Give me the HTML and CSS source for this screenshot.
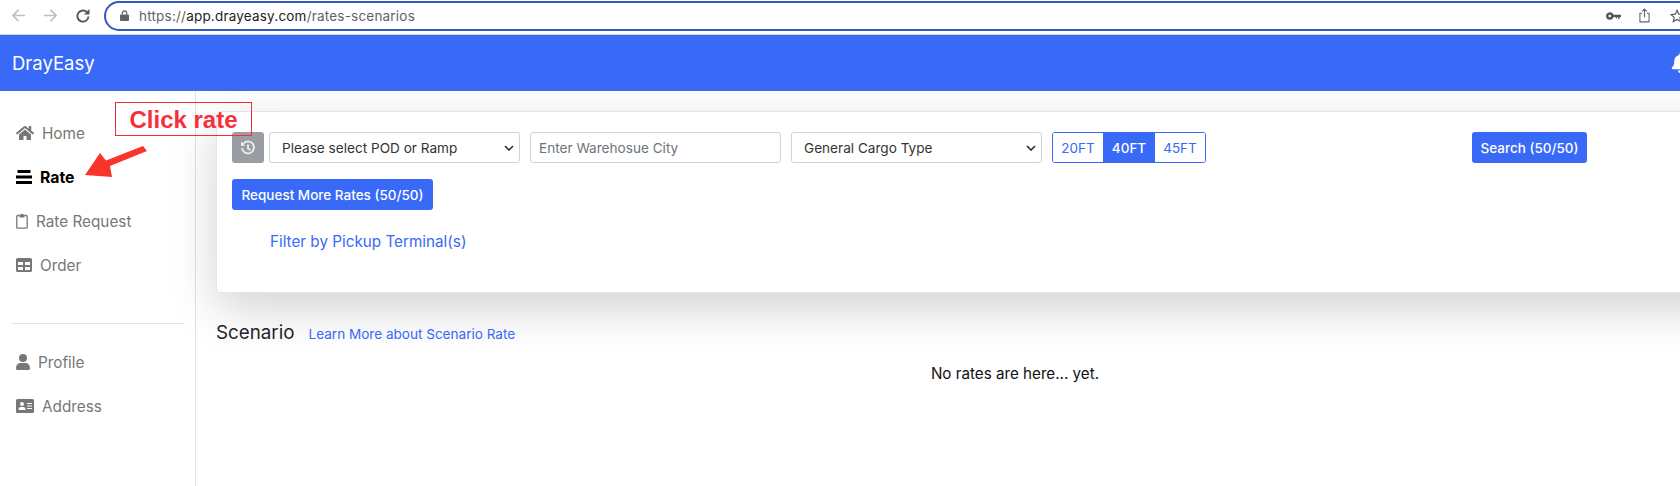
FILE: index.html
```html
<!DOCTYPE html>
<html lang="en">
<head>
<meta charset="utf-8">
<title>DrayEasy - Rates</title>
<link rel="stylesheet" href="styles.css">
</head>
<body>
<div class="chrome">
  <svg class="tb-icon" viewBox="0 0 16 16"><path class="stroke-light" d="M15 8H2M8 2L2 8l6 6"/></svg>
  <svg class="tb-icon" viewBox="0 0 16 16"><path class="stroke-light" d="M1 8h13M8 2l6 6-6 6"/></svg>
  <svg class="tb-icon reload" viewBox="0 0 16 16"><path class="stroke-dark" d="M13.5 8.500A5.600 5.600 0 1 1 12 4.200"/><path class="fill-dark" d="M14.500 1v5.500H9z"/></svg>
  <div class="omnibox">
    <svg class="lock" viewBox="0 0 10 12"><path d="M1 5h8a1 1 0 0 1 1 1v5a1 1 0 0 1-1 1H1a1 1 0 0 1-1-1V6a1 1 0 0 1 1-1z"/><path class="shackle" d="M2.600 5V3.200a2.400 2.400 0 0 1 4.800 0V5"/></svg>
    <span class="url"><span class="url-dim">https://</span>app.drayeasy.com<span class="url-dim">/rates-scenarios</span></span>
    <svg class="key" viewBox="0 0 16 8"><path d="M4 0a4 4 0 1 1-3.800 5.200A4 4 0 0 1 4 0zm0 2.600a1.400 1.400 0 1 0 0 2.800 1.400 1.400 0 0 0 0-2.800zM7.500 2.600H16v2.400h-1.500v2h-1.600V5h-1v1.500h-1.600V5H7.500z"/></svg>
    <svg class="share" viewBox="0 0 12 16"><path d="M3.500 5.500H1v9.500h10V5.500H8.500M6 10V1M3.500 3.500L6 1l2.500 2.500"/></svg>
    <svg class="star" viewBox="0 0 16 16"><path d="M8 1.500l2 4.400 4.800.5-3.600 3.200 1 4.700L8 11.900l-4.200 2.400 1-4.700L1.200 6.400 6 5.900z"/></svg>
  </div>
</div>

<div class="page">
  <header class="navbar">
    <span class="brand">DrayEasy</span>
    <svg class="bell" viewBox="0 0 448 512"><path d="M224 512c35 0 64-29 64-64H160c0 35 29 64 64 64zm215-150c-19-21-55-52-55-154 0-78-54-140-128-155V32a32 32 0 0 0-64 0v21C118 68 64 130 64 208c0 102-36 133-55 154-6 6-9 14-9 22 0 16 13 32 32 32h384c19 0 32-16 32-32 0-8-3-16-9-22z"/></svg>
  </header>

  <div class="layout">
    <nav class="sidebar">
      <a class="nav-item">
        <svg class="ico ico-home" viewBox="0 0 576 512"><path d="M280.37 148.26L96 300.11V464a16 16 0 0 0 16 16l112.06-.29a16 16 0 0 0 15.92-16V368a16 16 0 0 1 16-16h64a16 16 0 0 1 16 16v95.64a16 16 0 0 0 16 16.05L464 480a16 16 0 0 0 16-16V300L295.67 148.26a12.19 12.19 0 0 0-15.3 0zM571.6 251.47L488 182.56V44.05a12 12 0 0 0-12-12h-56a12 12 0 0 0-12 12v72.61L318.47 43a48 48 0 0 0-61 0L4.34 251.47a12 12 0 0 0-1.6 16.9l25.5 31A12 12 0 0 0 45.15 301l235.22-193.74a12.19 12.19 0 0 1 15.3 0L530.9 301a12 12 0 0 0 16.9-1.6l25.5-31a12 12 0 0 0-1.7-16.93z"/></svg>
        <span>Home</span>
      </a>
      <a class="nav-item active">
        <svg class="ico ico-bars" viewBox="0 0 16 14"><path d="M1.500 0h13v3h-13zM0 5.500h16v3H0zM0 11h16v3H0z"/></svg>
        <span>Rate</span>
      </a>
      <a class="nav-item">
        <svg class="ico ico-clip" viewBox="0 0 12 16"><path class="clip-body" d="M3.500 2.500H1.800a1 1 0 0 0-1 1v10.700a1 1 0 0 0 1 1h8.400a1 1 0 0 0 1-1V3.500a1 1 0 0 0-1-1H8.500"/><path d="M3.500 1.500h1.300a1.300 1.300 0 0 1 2.400 0h1.300v3h-5z"/></svg>
        <span>Rate Request</span>
      </a>
      <a class="nav-item">
        <svg class="ico ico-table" viewBox="0 0 16 14"><path d="M1.500 0h13A1.500 1.500 0 0 1 16 1.500v11a1.500 1.500 0 0 1-1.500 1.500h-13A1.500 1.500 0 0 1 0 12.500v-11A1.500 1.500 0 0 1 1.500 0zM2 4v3h5V4zm7 0v3h5V4zM2 9v3h5V9zm7 0v3h5V9z" fill-rule="evenodd"/></svg>
        <span>Order</span>
      </a>
      <hr class="nav-rule">
      <a class="nav-item">
        <svg class="ico ico-user" viewBox="0 0 14 16"><circle cx="7" cy="4" r="4"/><path d="M0 14c0-3 2-5 4.500-5h5c2.500 0 4.500 2 4.500 5v.5a1.500 1.500 0 0 1-1.500 1.500h-11A1.500 1.500 0 0 1 0 14.500z"/></svg>
        <span>Profile</span>
      </a>
      <a class="nav-item">
        <svg class="ico ico-card" viewBox="0 0 18 14"><path fill-rule="evenodd" d="M1.500 0h15A1.500 1.500 0 0 1 18 1.500v11a1.500 1.500 0 0 1-1.500 1.500h-15A1.500 1.500 0 0 1 0 12.500v-11A1.500 1.500 0 0 1 1.500 0zM6 3a2 2 0 1 0 0 4 2 2 0 0 0 0-4zM2.500 11h7c0-2-1-3-2-3h-3c-1 0-2 1-2 3zM11 4v1h5V4zm0 2.500v1h5v-1zM11 9v1h5V9z"/></svg>
        <span>Address</span>
      </a>
    </nav>

    <main class="content">
      <section class="card">
        <div class="search-row">
          <button class="btn btn-history" type="button" aria-label="History">
            <svg viewBox="0 0 16 16" class="history"><path class="hist-stroke" d="M3.200 3.800A6 6 0 1 1 2 8M8 4.500V8.500l2.500 1.500"/><path d="M1 1.500L5.200 5.600 1 6z"/></svg>
          </button>
          <select class="field select-wide">
            <option>Please select POD or Ramp</option>
          </select>
          <input class="field input" type="text" placeholder="Enter Warehosue City">
          <select class="field select-wide">
            <option>General Cargo Type</option>
          </select>
          <div class="btn-group">
            <button class="seg" type="button">20FT</button>
            <button class="seg seg-on" type="button">40FT</button>
            <button class="seg" type="button">45FT</button>
          </div>
          <button class="btn btn-primary btn-search" type="button">Search (50/50)</button>
        </div>
        <div class="request-row">
          <button class="btn btn-primary btn-request" type="button">Request More Rates (50/50)</button>
        </div>
        <a class="filter-link">Filter by Pickup Terminal(s)</a>
      </section>

      <div class="scenario-head">
        <h2 class="scenario-title">Scenario</h2>
        <a class="learn-link">Learn More about Scenario Rate</a>
      </div>
      <p class="empty">No rates are here... yet.</p>
    </main>
  </div>

  <div class="callout">Click rate</div>
  <svg class="callout-arrow" viewBox="0 0 64 33"><path d="M1 30L16 8 22 15.500 59 1 63 6 26 21 28 32z"/></svg>
</div>
</body>
</html>
```
FILE: styles.css
```css
* { box-sizing: border-box; }

html, body {
  margin: 0;
  padding: 0;
  width: 1680px;
  height: 486px;
  overflow: hidden;
  background: #fff;
  font-family: Inter, "Liberation Sans", sans-serif;
  color: #212529;
}

/* Browser toolbar */
.chrome {
  display: flex;
  align-items: center;
  height: 35px;
  width: 1680px;
  padding: 0 0 3px 11px;
  border-bottom: 1px solid #d4d4d4;
  background: #fff;
  overflow: hidden;
}
.tb-icon { width: 15px; height: 15px; margin-right: 17px; flex: none; }
.tb-icon.reload { width: 16px; height: 16px; margin-right: 13px; }
.stroke-light { fill: none; stroke: #c0c0c0; stroke-width: 1.8; }
.stroke-dark { fill: none; stroke: #555; stroke-width: 1.9; }
.fill-dark { fill: #555; }

.omnibox {
  flex: none;
  display: flex;
  align-items: center;
  width: 1640px;
  height: 30px;
  padding-left: 14px;
  border: 2px solid #3557bf;
  border-radius: 15px;
}
.lock { width: 9px; height: 11px; fill: #5f6368; flex: none; }
.shackle { fill: none; stroke: #5f6368; stroke-width: 1.4; }
.url { margin-left: 10px; font-size: 13.5px; color: #222; letter-spacing: .015em; }
.url-dim { color: #5f6368; }
.key { width: 15px; height: 8px; fill: #555; margin-left: 1191px; flex: none; }
.share { width: 11px; height: 15px; fill: none; stroke: #666; stroke-width: 1.2; margin-left: 18px; flex: none; }
.star { width: 14px; height: 14px; fill: none; stroke: #555; stroke-width: 1.3; margin-left: 20px; flex: none; }

/* Page */
.page { position: relative; width: 1814px; }

.navbar {
  position: relative;
  z-index: 2;
  display: flex;
  align-items: center;
  justify-content: space-between;
  height: 56px;
  padding: 0 124px 0 12px;
  background: #3869f7;
}
.brand { color: #fff; font-size: 18.5px; }
.bell { width: 19px; height: 20px; fill: #fff; }

.layout { display: flex; height: 395px; }

.sidebar {
  flex: none;
  width: 196px;
  padding: 20px 0 0;
  border-right: 1px solid #e3e3e3;
}
.nav-item {
  display: flex;
  align-items: center;
  gap: 8px;
  height: 44px;
  padding-left: 16px;
  color: #777;
  font-size: 15.3px;
}
.nav-item.active { color: #000; font-weight: 700; font-size: 15.8px; }
.ico { fill: #777; flex: none; }
.active .ico { fill: #000; }
.ico-home { width: 18px; height: 16px; }
.ico-bars { width: 16px; height: 14px; }
.ico-clip { width: 12px; height: 16px; }
.clip-body { fill: none; stroke: #777; stroke-width: 1.3; }
.ico-table { width: 16px; height: 14px; }
.ico-user { width: 14px; height: 16px; }
.ico-card { width: 18px; height: 14px; }
.nav-rule {
  height: 1px;
  margin: 36px 11px 16px;
  border: 0;
  background: #e3e3e3;
}

.content { flex: 1; min-width: 0; padding: 20px 0 0 20px; }

.card {
  height: 182px;
  padding: 20px 15px 0;
  background: #fff;
  border: 1px solid #e5e5e5;
  border-radius: 4px;
  box-shadow: 0 16px 48px rgba(0, 0, 0, .175);
}

.search-row { display: flex; align-items: stretch; height: 31px; }

.btn {
  height: 31px;
  padding: 0 9px;
  border: 0;
  border-radius: 3px;
  color: #fff;
  font: 500 13.5px Inter, "Liberation Sans", sans-serif;
  white-space: nowrap;
}
.btn-primary { background: #3869f7; }
.btn-request { padding: 0 9.5px; }
.btn-history {
  width: 32px;
  padding: 0;
  display: flex;
  align-items: center;
  justify-content: center;
  background: #9a9ea3;
}
.history { width: 16px; height: 16px; fill: #f0f0f0; }
.hist-stroke { fill: none; stroke: #f0f0f0; stroke-width: 1.8; }

.field {
  width: 251px;
  height: 31px;
  margin-right: 10px;
  padding: 0 8px;
  border: 1px solid #ced4da;
  border-radius: 3px;
  background-color: #fff;
  color: #333;
  font: 13.6px Inter, "Liberation Sans", sans-serif;
}
.btn-history + .field { margin-left: 5px; }
.input::placeholder { color: #6c757d; opacity: 1; }
.select-wide {
  appearance: none;
  padding-left: 12px;
  background-image: url("data:image/svg+xml,%3Csvg xmlns='http://www.w3.org/2000/svg' viewBox='0 0 10 6'%3E%3Cpath d='M1 1l4 4 4-4' fill='none' stroke='%23333' stroke-width='1.7'/%3E%3C/svg%3E");
  background-repeat: no-repeat;
  background-position: right 5px center;
  background-size: 10px 6px;
}

.btn-group {
  display: flex;
  width: 154px;
  height: 31px;
  border: 1px solid #3869f7;
  border-radius: 3px;
  overflow: hidden;
}
.seg {
  flex: 1;
  padding: 0;
  border: 0;
  background: #fff;
  color: #3869f7;
  font: 13.5px Inter, "Liberation Sans", sans-serif;
}
.seg-on { flex: 0 0 52px; background: #3869f7; color: #fff; font-weight: 500; }
.btn-search { margin-left: 266px; width: 115px; padding: 0; }

.request-row { margin-top: 16px; }

.filter-link {
  display: block;
  margin: 21px 0 0 38px;
  color: #3869f7;
  font-size: 15.25px;
  line-height: 22px;
}

.scenario-head {
  display: flex;
  align-items: baseline;
  gap: 14px;
  margin-top: 28px;
}
.scenario-title { margin: 0; font-size: 18.8px; font-weight: 400; line-height: 24px; }
.learn-link { color: #3869f7; font-size: 13.55px; }

.empty {
  margin: 19px 0 0;
  font-size: 15.2px;
  line-height: 20px;
  text-align: center;
  color: #111;
}

/* Annotation laid over the page */
.callout {
  position: absolute;
  z-index: 3;
  left: 115px;
  top: 67px;
  width: 137px;
  height: 34px;
  padding-top: 2px;
  border: 1px solid #f03030;
  color: #f5303c;
  font: 700 24px/30px "Liberation Sans", sans-serif;
  text-align: center;
}
.callout-arrow {
  position: absolute;
  z-index: 3;
  left: 84px;
  top: 110px;
  width: 64px;
  height: 33px;
  fill: #f9342c;
}
```
